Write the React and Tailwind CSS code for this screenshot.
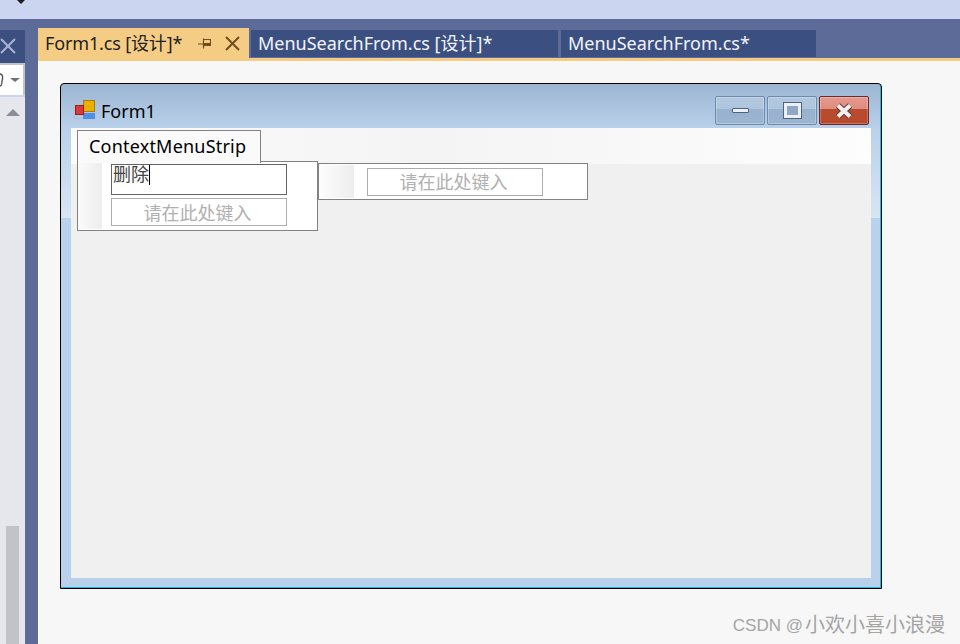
const FONT = { fontFamily: '"Noto Sans", "Noto Sans CJK SC", sans-serif' };
const WATERMARK_FONT = { fontFamily: '"Liberation Sans", "Noto Sans CJK SC", sans-serif' };

function Cross({ size, weight = 2, className }) {
  return (
    <svg width={size} height={size} viewBox={`0 0 ${size} ${size}`} className={className}>
      <path d={`M1 1L${size - 1} ${size - 1}M${size - 1} 1L1 ${size - 1}`} stroke="currentColor" strokeWidth={weight} fill="none" />
    </svg>
  );
}

function DocTab({ label, className }) {
  return (
    <div className={`flex items-center h-[27px] pl-[7px] pb-[2px] bg-[#3b4f81] text-[#f2f4fa] text-[18px] leading-none whitespace-nowrap ${className}`}>
      {label}
    </div>
  );
}

function CaptionButton({ red, children }) {
  return (
    <div className={`flex items-center justify-center w-[50px] h-[29px] rounded-[2px] border shadow-[inset_0_0_0_1px_rgba(255,255,255,0.25)] ${red ? 'border-[#6b2a30] bg-[linear-gradient(#e39a8c_0%,#dd8c7e_45%,#b84a2e_46%,#b84a2e_100%)]' : 'border-[#6f8bab] bg-[linear-gradient(#b2c8e0_0%,#aec5de_45%,#97b1cf_46%,#9ab4d2_100%)]'}`}>
      {children}
    </div>
  );
}

function TypeHere({ className }) {
  return (
    <div className={`flex items-center justify-center pt-[1px] pr-[3px] border border-[#adadad] bg-white text-[#b0b0b0] text-[18px] leading-none ${className}`}>
      请在此处键入
    </div>
  );
}

export default function App() {
  return (
    <div className="w-[960px] h-[644px] overflow-hidden flex flex-col bg-[#5d6b99] relative" style={FONT}>
      {/* top toolbar */}
      <div className="h-[19px] shrink-0 bg-[#ccd5f0] relative">
        <div className="absolute left-[17px] top-0 w-0 h-0 border-x-[4px] border-x-transparent border-t-[4px] border-t-[#1e1e1e]" />
      </div>

      <div className="flex flex-1 min-h-0">
        {/* left docked panel */}
        <div className="w-[25px] shrink-0 flex flex-col">
          <div className="h-[11px] shrink-0" />
          <div className="h-[33px] shrink-0 bg-[#3b4f81] flex items-center pb-[1px]">
            <Cross size={16} weight={2} className="text-[#aab5d2]" />
          </div>
          <div className="flex-1 flex flex-col bg-[#e6e7ed]">
            <div className="h-[34px] shrink-0 bg-[#ccd5f0] pb-[2px]">
              <div className="w-[25px] h-[32px] border-t-2 border-r-2 border-[#bfc3cd] bg-white flex items-center justify-between">
                <svg width="4" height="14" viewBox="0 0 4 14">
                  <path d="M0 1C3 1 3 5 2 8C2 11 1 13 0 13" fill="none" stroke="#555" strokeWidth="1.4" />
                </svg>
                <div className="mr-[3px] w-0 h-0 border-x-[5px] border-x-transparent border-t-[4px] border-t-[#717171]" />
              </div>
            </div>
            <div className="flex flex-col flex-1 pl-[6px]">
              <div className="mt-[12px] w-0 h-0 border-x-[7px] border-x-transparent border-b-[7px] border-b-[#8b8d98]" />
              <div className="mt-auto w-[13px] h-[118px] bg-[#c2c3c9]" />
            </div>
          </div>
        </div>
        <div className="w-[13px] shrink-0" />

        {/* document well */}
        <div className="flex-1 flex flex-col min-w-0">
          <div className="h-[39px] shrink-0 flex items-end">
            <div className="w-[211px] h-[30px] bg-[#f5cc84] flex items-center pl-[7px] text-[#1e1e1e] text-[18px] leading-none">
              <span className="w-[153px] whitespace-nowrap tracking-[-0.15px] -mt-[1px]">Form1.cs [设计]*</span>
              <svg width="13" height="11" viewBox="0 0 13 11" className="text-[#6f4f1e]">
                <path d="M0 6h5M5.5 0.5v10M5.5 1.5h7v6h-7" fill="none" stroke="currentColor" strokeWidth="1.2" />
                <rect x="6" y="5" width="7" height="3" fill="currentColor" />
              </svg>
              <Cross size={15} weight={2} className="ml-[14px] text-[#6f4f1e]" />
            </div>
            <DocTab label="MenuSearchFrom.cs [设计]*" className="ml-[2px] w-[307px] mb-[1px]" />
            <DocTab label="MenuSearchFrom.cs*" className="ml-[3px] w-[255px] mb-[1px]" />
          </div>
          <div className="h-[3px] shrink-0 bg-[#f5cc84]" />

          {/* designer surface */}
          <div className="flex-1 bg-[#f7f7f7] relative pl-[22px] pt-[22px]">
            {/* form window */}
            <div className="w-[822px] h-[506px] border border-black rounded-t-[4px] flex flex-col bg-[linear-gradient(#9cb5d2_0px,#b9d1ea_45px,#d7e6f4_134px,#b9d1ea_134px)] shadow-[inset_-1px_-1px_0_#27b4d8] overflow-hidden">
              <div className="h-[44px] shrink-0 flex items-center pt-[10px] pl-[13px] pr-[11px]">
                <svg width="22" height="21" viewBox="0 0 22 21" className="-mt-[3px]">
                  <rect x="0.5" y="0.5" width="10" height="19" fill="none" stroke="#b8b8c4" opacity="0.6" />
                  <rect x="9.5" y="1.5" width="11" height="11" fill="#e8b000" stroke="#a87a10" />
                  <rect x="9" y="14" width="12" height="6" fill="#4f8fe6" />
                  <rect x="1.5" y="6.5" width="8" height="9" fill="#d93a3a" stroke="#9c1c1c" />
                </svg>
                <span className="ml-[5px] text-[18px] leading-none text-black">Form1</span>
                <div className="ml-auto flex gap-[2px] -mt-[1px] mr-px">
                  <CaptionButton>
                    <div className="w-[17px] h-[5px] bg-[#eceff3] border border-[#51627c] rounded-[1px]" />
                  </CaptionButton>
                  <CaptionButton>
                    <div className="w-[17px] h-[15px] bg-[#8fa8c6] border-[3px] border-[#eceff3] outline outline-[#51627c]" />
                  </CaptionButton>
                  <CaptionButton red>
                    <svg width="18" height="16" viewBox="0 0 18 16">
                      <path d="M3 2.5L15 13.5M15 2.5L3 13.5" stroke="#5f3a3a" strokeWidth="6" fill="none" />
                      <path d="M3 2.5L15 13.5M15 2.5L3 13.5" stroke="#f0f0f0" strokeWidth="4" fill="none" />
                    </svg>
                  </CaptionButton>
                </div>
              </div>

              {/* client area */}
              <div className="flex-1 mx-[10px] mb-[10px] bg-[#f0f0f0] relative">
                <div className="h-[36px] bg-[linear-gradient(90deg,#fbfbfb,#f4f4f4_45%,#fdfdfd)]" />

                {/* menu designer overlay */}
                <div className="absolute left-[247px] top-[35px] w-[270px] h-[37px] border border-[#828282] bg-white flex items-center">
                  <div className="w-[35px] h-[33px] bg-[linear-gradient(90deg,#fdfdfd,#ededed)]" />
                  <TypeHere className="ml-[13px] w-[176px] h-[28px]" />
                </div>
                <div className="absolute left-[6px] top-[2px] w-[184px] h-[33px] border border-b-0 border-[#828282] bg-[#fafafa] flex items-center pl-[11px] pb-[2px] text-[18px] leading-none tracking-[0.2px] text-black z-10">
                  ContextMenuStrip
                </div>
                <div className="absolute left-[6px] top-[33px] w-[241px] h-[70px] border border-[#828282] bg-white flex">
                  <div className="w-[24px] bg-[linear-gradient(90deg,#fbfbfb,#ededed)] my-[1px]" />
                  <div className="ml-[9px] pt-[2px] flex flex-col gap-[3px]">
                    <div className="w-[176px] h-[31px] border border-[#646464] bg-white pl-[1px] text-[18px] leading-[18px] text-[#444] flex items-start">
                      删除<span className="w-px h-[20px] bg-black" />
                    </div>
                    <TypeHere className="w-[176px] h-[28px]" />
                  </div>
                </div>
              </div>
            </div>

            <div className="absolute right-[15px] bottom-[9px] flex items-center leading-none text-[#a4a4a4] whitespace-nowrap" style={WATERMARK_FONT}>
              <span className="text-[17px] mr-[2px]">CSDN @</span>
              <span className="text-[20px]">小欢小喜小浪漫</span>
            </div>
          </div>
        </div>
      </div>
    </div>
  );
}
